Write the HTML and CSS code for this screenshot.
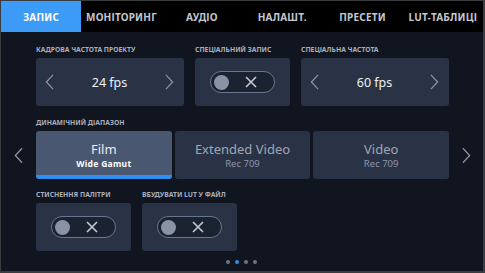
FILE: index.html
```html
<!DOCTYPE html>
<html>
<head>
<title>Запис</title>
<link rel="stylesheet" href="styles.css">
</head>
<body>
    <div class="screen">
        <nav class="tabs">
            <div class="tab active">ЗАПИС</div>
            <div class="tab">МОНІТОРИНГ</div>
            <div class="tab">АУДІО</div>
            <div class="tab">НАЛАШТ.</div>
            <div class="tab">ПРЕСЕТИ</div>
            <div class="tab">LUT-ТАБЛИЦІ</div>
        </nav>

        <main class="page">
            <div class="row row-top">
                <div class="field wide">
                    <div class="label">КАДРОВА ЧАСТОТА ПРОЕКТУ</div>
                    <div class="card stepper">
                        <svg class="chev" viewBox="0 0 10 18"><path d="M9 1 L1.5 9 L9 17"/></svg>
                        <span class="value">24 fps</span>
                        <svg class="chev" viewBox="0 0 10 18"><path d="M1 1 L8.5 9 L1 17"/></svg>
                    </div>
                </div>
                <div class="field narrow">
                    <div class="label">СПЕЦІАЛЬНИЙ ЗАПИС</div>
                    <div class="card">
                        <div class="toggle">
                            <span class="knob"></span>
                            <svg class="cross" viewBox="0 0 12 12"><path d="M1 1 L11 11 M11 1 L1 11"/></svg>
                        </div>
                    </div>
                </div>
                <div class="field wide">
                    <div class="label">СПЕЦІАЛЬНА ЧАСТОТА</div>
                    <div class="card stepper">
                        <svg class="chev" viewBox="0 0 10 18"><path d="M9 1 L1.5 9 L9 17"/></svg>
                        <span class="value">60 fps</span>
                        <svg class="chev" viewBox="0 0 10 18"><path d="M1 1 L8.5 9 L1 17"/></svg>
                    </div>
                </div>
            </div>

            <div class="label range-label">ДИНАМІЧНИЙ ДІАПАЗОН</div>
            <div class="range-row">
                <div class="nav">
                    <svg class="chev big" viewBox="0 0 10 18"><path d="M9 1 L1.5 9 L9 17"/></svg>
                </div>
                <div class="segments">
                    <div class="seg selected">
                        <div class="seg-title">Film</div>
                        <div class="seg-sub">Wide Gamut</div>
                    </div>
                    <div class="seg">
                        <div class="seg-title">Extended Video</div>
                        <div class="seg-sub">Rec 709</div>
                    </div>
                    <div class="seg">
                        <div class="seg-title">Video</div>
                        <div class="seg-sub">Rec 709</div>
                    </div>
                </div>
                <div class="nav">
                    <svg class="chev big" viewBox="0 0 10 18"><path d="M1 1 L8.5 9 L1 17"/></svg>
                </div>
            </div>

            <div class="row row-bottom">
                <div class="field narrow">
                    <div class="label">СТИСНЕННЯ ПАЛІТРИ</div>
                    <div class="card">
                        <div class="toggle">
                            <span class="knob"></span>
                            <svg class="cross" viewBox="0 0 12 12"><path d="M1 1 L11 11 M11 1 L1 11"/></svg>
                        </div>
                    </div>
                </div>
                <div class="field narrow">
                    <div class="label">ВБУДУВАТИ LUT У ФАЙЛ</div>
                    <div class="card">
                        <div class="toggle">
                            <span class="knob"></span>
                            <svg class="cross" viewBox="0 0 12 12"><path d="M1 1 L11 11 M11 1 L1 11"/></svg>
                        </div>
                    </div>
                </div>
            </div>

            <div class="dots">
                <span class="dot"></span>
                <span class="dot on"></span>
                <span class="dot"></span>
                <span class="dot"></span>
            </div>
        </main>
    </div>
</body>
</html>
```

FILE: styles.css
```css
* {
    box-sizing: border-box;
}

body {
    margin: 0;
    background-color: #3b3c3e;
    font-family: "Noto Sans", "Open Sans", sans-serif;
}

.screen {
    width: 485px;
    height: 273px;
    border-style: solid;
    border-color: #3b3c3e;
    border-width: 1px 2px 2px 1px;
    background-color: #10151f;
    display: flex;
    flex-direction: column;
}

.tabs {
    display: grid;
    grid-template-columns: repeat(6, 1fr);
    height: 31px;
    background-color: #000;
}

.tab {
    display: flex;
    align-items: center;
    justify-content: center;
    font-size: 10px;
    font-weight: 700;
    letter-spacing: 0.2px;
    color: #c3c7cf;
}

.tab.active {
    background-color: #3b9bf7;
    color: #fff;
}

.page {
    padding: 12px 34px 0 35px;
}

.label {
    height: 12px;
    line-height: 12px;
    margin-bottom: 2px;
    font-size: 6.8px;
    font-weight: 700;
    color: #a8aebb;
    white-space: nowrap;
}

.row {
    display: flex;
    gap: 11px;
}

.field.wide {
    width: 148px;
}

.field.narrow {
    width: 95px;
}

.card {
    height: 48px;
    border-radius: 3px;
    background-color: #2a3345;
    display: flex;
    align-items: center;
    justify-content: center;
}

.stepper {
    justify-content: space-between;
    padding: 0 10px 0 9px;
}

.value {
    font-size: 12.5px;
    color: #eef0f4;
}

.chev {
    width: 9px;
    height: 16px;
    fill: none;
    stroke: #8c95a6;
    stroke-width: 1.4;
}

.chev.big {
    height: 17px;
}

.toggle {
    width: 65px;
    height: 22px;
    border: 1px solid #68768f;
    border-radius: 11px;
    background-color: #1b2230;
    display: flex;
    align-items: center;
    padding-left: 3px;
}

.knob {
    width: 15px;
    height: 15px;
    border-radius: 50%;
    background-color: #8a92a6;
}

.cross {
    width: 12px;
    height: 12px;
    margin-left: 16px;
    fill: none;
    stroke: #c4cad4;
    stroke-width: 1.6;
}

.range-label {
    margin-top: 11px;
}

.range-row {
    display: flex;
    margin: 0 -34px 0 -35px;
}

.nav {
    width: 35px;
    display: flex;
    align-items: center;
    justify-content: center;
}

.nav:last-child {
    width: 34px;
}

.segments {
    width: 413px;
    display: grid;
    grid-template-columns: 1fr 1fr 1fr;
    gap: 3px;
}

.seg {
    height: 48px;
    border-radius: 3px;
    background-color: #2a3345;
    display: flex;
    flex-direction: column;
    align-items: center;
    justify-content: center;
    color: #9ea6b5;
}

.seg.selected {
    background-color: #4a5771;
    border-bottom: 4px solid #2f8ff0;
    padding-top: 4px;
    color: #e9ecf1;
}

.seg-title {
    font-size: 13px;
    line-height: 17px;
}

.seg-sub {
    font-size: 9.5px;
    line-height: 12px;
    color: #8e97a8;
}

.seg.selected .seg-sub {
    font-size: 8.5px;
    font-weight: 700;
    color: #fff;
    letter-spacing: 0.3px;
}

.row-bottom {
    margin-top: 10px;
}

.dots {
    display: flex;
    justify-content: center;
    gap: 5px;
    margin-top: 9px;
    padding-right: 3px;
}

.dot {
    width: 4px;
    height: 4px;
    border-radius: 50%;
    background-color: #6c7383;
}

.dot.on {
    background-color: #2f8ff0;
}
```
